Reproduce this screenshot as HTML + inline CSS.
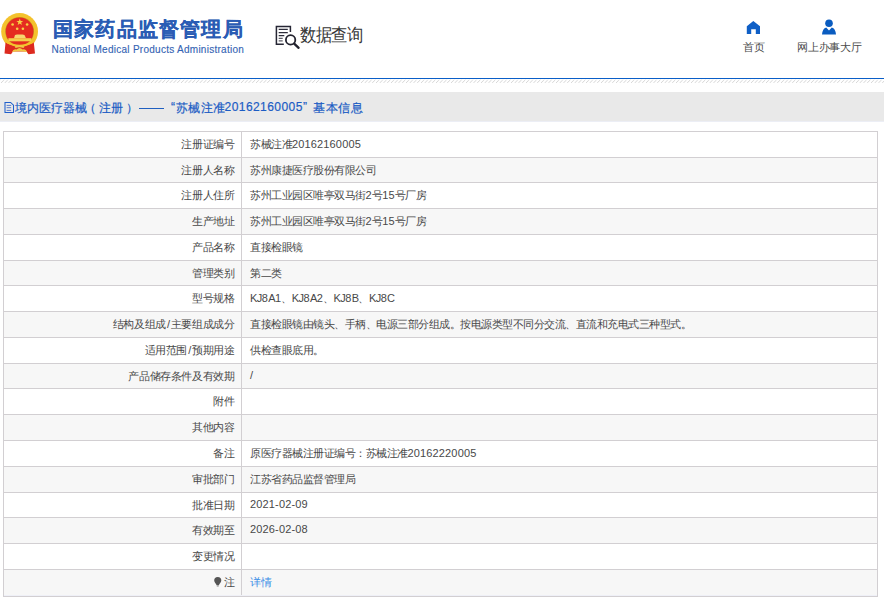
<!DOCTYPE html>
<html><head><meta charset="utf-8">
<style>
html,body{margin:0;padding:0;background:#fff;width:884px;height:603px;overflow:hidden;font-family:"Liberation Sans",sans-serif;}
.a{position:absolute;white-space:nowrap;}
#title{left:53px;top:16px;font-size:20px;letter-spacing:1.2px;font-weight:bold;color:#2a5cb4;-webkit-text-stroke:0.15px #2a5cb4;}
#en{left:51.6px;top:44.4px;font-size:10px;letter-spacing:0.27px;color:#3363b3;-webkit-text-stroke:0.12px #3363b3;}
#dq{left:300px;top:23.5px;font-size:16px;letter-spacing:-0.35px;color:#363636;transform:scaleY(1.1);transform-origin:0 0;}
.nav{font-size:11px;color:#4a4a4a;}
#line{left:0;top:78px;width:884px;height:1px;background:#0a5ec8;}
#band{left:0;top:92px;width:884px;height:29px;background:#e9e9e9;border-bottom:1px solid #eceef5;}
.cr{top:100px;font-size:12px;color:#1b5cc4;-webkit-text-stroke:0.2px #1b5cc4;}
.hl{left:3px;width:875px;height:1px;background:#d2cfd2;}
.vl{width:1px;background:#d2cfd2;}
.val.link{color:#3a8ee6;}
.n{letter-spacing:0.15px;}
.sl{padding:0 1.2px;}
.lab{position:absolute;right:649.5px;font-size:11px;letter-spacing:-0.4px;color:#484848;}
.val{position:absolute;left:250px;font-size:11px;letter-spacing:-0.5px;color:#484848;}
</style></head><body>
<!-- emblem -->
<svg class="a" style="left:0;top:10px" width="40" height="46" viewBox="0 10 40 46">
  <circle cx="19.6" cy="31.4" r="18.4" fill="#f4c22c"/>
  <circle cx="19.6" cy="31.4" r="14.4" fill="#c9a020"/>
  <circle cx="19.6" cy="31.4" r="13.9" fill="#e52c20"/>
  <path d="M19.8 18.6 L20.7 21 L23.2 21 L21.2 22.5 L21.9 25 L19.8 23.5 L17.7 25 L18.4 22.5 L16.4 21 L18.9 21 Z" fill="#f7d145"/>
  <circle cx="12.6" cy="24.5" r="1.3" fill="#f7d145"/><circle cx="27.1" cy="24.5" r="1.3" fill="#f7d145"/>
  <circle cx="17.2" cy="28.7" r="1.3" fill="#f7d145"/><circle cx="22.9" cy="28.7" r="1.3" fill="#f7d145"/>
  <path d="M14 38.2 L15 35 L17 34.4 L22.5 34.4 L24.5 35 L26 38.2 Z" fill="#f6d770"/>
  <rect x="8.4" y="38.2" width="22.9" height="3.1" fill="#f4cf4a"/>
  <path d="M5.5 42.5 Q19.6 50 33.8 42.5 L35 53.5 L28.5 54.3 L26.5 51.5 L13 51.5 L11 54.3 L4.5 53.5 Z" fill="#dd2a1f"/>
  <path d="M6 41 Q19.6 48.5 33.2 41 L32.5 43.2 Q19.6 50.5 6.8 43.2 Z" fill="#f4c22c"/>
  <path d="M12 52 Q13.5 48.5 16.5 49.5 Q19.6 46.5 22.7 49.5 Q25.7 48.5 27.2 52 Q19.6 50.5 12 52 Z" fill="#f0c844"/>
  <path d="M14.5 46.5 Q19.6 44 24.7 46.5 L23.5 48 Q19.6 46.5 15.7 48 Z" fill="#f0c844"/>
</svg>
<div id="title" class="a">国家药品监督管理局</div>
<div id="en" class="a">National Medical Products Administration</div>
<!-- data query icon -->
<svg class="a" style="left:274px;top:24px" width="28" height="26" viewBox="0 0 28 26">
  <path d="M9.8 20.3 H2.4 V2.4 H16.4 V8" fill="none" stroke="#262634" stroke-width="1.5"/>
  <path d="M4.7 5.4 H13.8 M4.7 8.5 H13.8 M4.7 11.5 H10.3" stroke="#2c2c3a" stroke-width="1.25"/>
  <path d="M4.7 14.3 H8.7 M4.7 16.8 H8.7" stroke="#5c5c66" stroke-width="1.2"/>
  <circle cx="16.6" cy="15.9" r="4.7" fill="none" stroke="#22222e" stroke-width="1.8"/>
  <path d="M20.2 19.6 L24.6 23.8" stroke="#22222e" stroke-width="2.3" stroke-linecap="round"/>
</svg>
<div id="dq" class="a">数据查询</div>
<!-- home -->
<svg class="a" style="left:746px;top:20px" width="15" height="14" viewBox="0 0 15 14">
  <path d="M7.3 1 L14 6.2 V14 H9.8 V9.3 H5.2 V14 H0.8 V6.2 Z" fill="#0f5fc6"/>
</svg>
<div class="a nav" style="left:743px;top:40px">首页</div>
<!-- person -->
<svg class="a" style="left:821px;top:19px" width="16" height="16" viewBox="0 0 16 16">
  <circle cx="8" cy="4.3" r="3.8" fill="#0a5cc0"/>
  <path d="M1 15.6 Q1.5 9.5 5.2 8.5 L8 11.5 L10.8 8.5 Q14.5 9.5 15 15.6 Z" fill="#0a5cc0"/>
</svg>
<div class="a nav" style="left:797px;top:40px;letter-spacing:-0.25px">网上办事大厅</div>
<div id="line" class="a"></div>
<svg class="a" style="left:0;top:79px" width="884" height="5"><defs><pattern id="ht" width="3.75" height="5" patternUnits="userSpaceOnUse" x="1"><path d="M0 3.9 L3.1 0.9" stroke="#d2d2d2" stroke-width="0.9"/></pattern></defs><rect width="884" height="5" fill="url(#ht)"/></svg>
<div id="band" class="a"></div>
<svg class="a" style="left:4px;top:101px" width="11" height="13" viewBox="0 0 11 13">
  <path d="M1 1.4 H6.6 L9.5 4.2 V11.4 H1 Z" fill="none" stroke="#1f5fcc" stroke-width="1.05"/>
  <path d="M2.6 4.4 H7.2 M2.6 6.7 H7.2 M2.6 9.4 H7.2" stroke="#4a70c8" stroke-width="0.9"/>
</svg>
<div class="a cr" style="left:14.8px">境内医疗器械</div>
<div class="a cr" style="left:84.3px">（</div>
<div class="a cr" style="left:98.6px;letter-spacing:0.3px">注册</div>
<div class="a cr" style="left:126.4px">）</div>
<div class="a" style="left:139px;top:108px;width:25px;height:1px;background:#1f5fc0"></div>
<div class="a cr" style="left:171px">“</div>
<div class="a cr" style="left:176px;letter-spacing:0.25px">苏械注准</div>
<div class="a cr" style="left:224.6px;letter-spacing:0.43px">20162160005</div>
<div class="a cr" style="left:303px">”</div>
<div class="a cr" style="left:313px;letter-spacing:0.5px">基本信息</div>
<div id="table"><div class="a" style="left:3px;top:131px;width:875px;height:26px;background:#fff"></div>
<div class="a hl" style="top:131px"></div>
<div class="a lab" style="top:137px">注册证编号</div>
<div class="a val" style="top:137px">苏械注准<span class="n">20162160005</span></div>
<div class="a" style="left:3px;top:157px;width:875px;height:25px;background:#f7f7f7"></div>
<div class="a hl" style="top:157px"></div>
<div class="a lab" style="top:163px">注册人名称</div>
<div class="a val" style="top:163px">苏州康捷医疗股份有限公司</div>
<div class="a" style="left:3px;top:182px;width:875px;height:26px;background:#fff"></div>
<div class="a hl" style="top:182px"></div>
<div class="a lab" style="top:188px">注册人住所</div>
<div class="a val" style="top:188px">苏州工业园区唯亭双马街<span class="n">2</span>号<span class="n">15</span>号厂房</div>
<div class="a" style="left:3px;top:208px;width:875px;height:26px;background:#f7f7f7"></div>
<div class="a hl" style="top:208px"></div>
<div class="a lab" style="top:214px">生产地址</div>
<div class="a val" style="top:214px">苏州工业园区唯亭双马街<span class="n">2</span>号<span class="n">15</span>号厂房</div>
<div class="a" style="left:3px;top:234px;width:875px;height:26px;background:#fff"></div>
<div class="a hl" style="top:234px"></div>
<div class="a lab" style="top:240px">产品名称</div>
<div class="a val" style="top:240px">直接检眼镜</div>
<div class="a" style="left:3px;top:260px;width:875px;height:25px;background:#f7f7f7"></div>
<div class="a hl" style="top:260px"></div>
<div class="a lab" style="top:266px">管理类别</div>
<div class="a val" style="top:266px">第二类</div>
<div class="a" style="left:3px;top:285px;width:875px;height:26px;background:#fff"></div>
<div class="a hl" style="top:285px"></div>
<div class="a lab" style="top:291px">型号规格</div>
<div class="a val" style="top:291px">KJ<span class="n">8</span>A<span class="n">1</span>、KJ<span class="n">8</span>A<span class="n">2</span>、KJ<span class="n">8</span>B、KJ<span class="n">8</span>C</div>
<div class="a" style="left:3px;top:311px;width:875px;height:26px;background:#f7f7f7"></div>
<div class="a hl" style="top:311px"></div>
<div class="a lab" style="top:317px">结构及组成<span class="sl">/</span>主要组成成分</div>
<div class="a val" style="top:317px">直接检眼镜由镜头、手柄、电源三部分组成。按电源类型不同分交流、直流和充电式三种型式。</div>
<div class="a" style="left:3px;top:337px;width:875px;height:26px;background:#fff"></div>
<div class="a hl" style="top:337px"></div>
<div class="a lab" style="top:343px">适用范围<span class="sl">/</span>预期用途</div>
<div class="a val" style="top:343px">供检查眼底用。</div>
<div class="a" style="left:3px;top:363px;width:875px;height:25px;background:#f7f7f7"></div>
<div class="a hl" style="top:363px"></div>
<div class="a lab" style="top:369px">产品储存条件及有效期</div>
<div class="a val" style="top:369px">/</div>
<div class="a" style="left:3px;top:388px;width:875px;height:26px;background:#fff"></div>
<div class="a hl" style="top:388px"></div>
<div class="a lab" style="top:394px">附件</div>
<div class="a" style="left:3px;top:414px;width:875px;height:26px;background:#f7f7f7"></div>
<div class="a hl" style="top:414px"></div>
<div class="a lab" style="top:420px">其他内容</div>
<div class="a" style="left:3px;top:440px;width:875px;height:26px;background:#fff"></div>
<div class="a hl" style="top:440px"></div>
<div class="a lab" style="top:446px">备注</div>
<div class="a val" style="top:446px">原医疗器械注册证编号：苏械注准<span class="n">20162220005</span></div>
<div class="a" style="left:3px;top:466px;width:875px;height:26px;background:#f7f7f7"></div>
<div class="a hl" style="top:466px"></div>
<div class="a lab" style="top:472px">审批部门</div>
<div class="a val" style="top:472px">江苏省药品监督管理局</div>
<div class="a" style="left:3px;top:492px;width:875px;height:25px;background:#fff"></div>
<div class="a hl" style="top:492px"></div>
<div class="a lab" style="top:498px">批准日期</div>
<div class="a val" style="top:498px"><span class="n">2021-02-09</span></div>
<div class="a" style="left:3px;top:517px;width:875px;height:26px;background:#f7f7f7"></div>
<div class="a hl" style="top:517px"></div>
<div class="a lab" style="top:523px">有效期至</div>
<div class="a val" style="top:523px"><span class="n">2026-02-08</span></div>
<div class="a" style="left:3px;top:543px;width:875px;height:26px;background:#fff"></div>
<div class="a hl" style="top:543px"></div>
<div class="a lab" style="top:549px">变更情况</div>
<div class="a" style="left:3px;top:569px;width:875px;height:26px;background:#f7f7f7"></div>
<div class="a hl" style="top:569px"></div>
<div class="a lab" style="top:575px">注</div>
<div class="a val link" style="top:575px">详情</div>
<div class="a" style="left:4px;top:595px;width:873px;height:1px;background:#eff0f7"></div>
<div class="a hl" style="top:596px"></div>
<svg class="a" style="left:213px;top:576px" width="10" height="12" viewBox="0 0 10 12"><path d="M4.75 1 A3.55 3.55 0 0 1 8.3 4.55 C8.3 6.6 6.4 7.6 5.9 9.3 L3.6 9.3 C3.1 7.6 1.2 6.6 1.2 4.55 A3.55 3.55 0 0 1 4.75 1Z" fill="#555"/><path d="M3.8 10 H5.7" stroke="#777" stroke-width="0.9"/></svg>
<div class="a vl" style="left:3px;top:131px;height:466px"></div>
<div class="a vl" style="left:241px;top:131px;height:464px"></div>
<div class="a vl" style="left:877px;top:131px;height:466px"></div></div><!--/table-->
</body></html>
